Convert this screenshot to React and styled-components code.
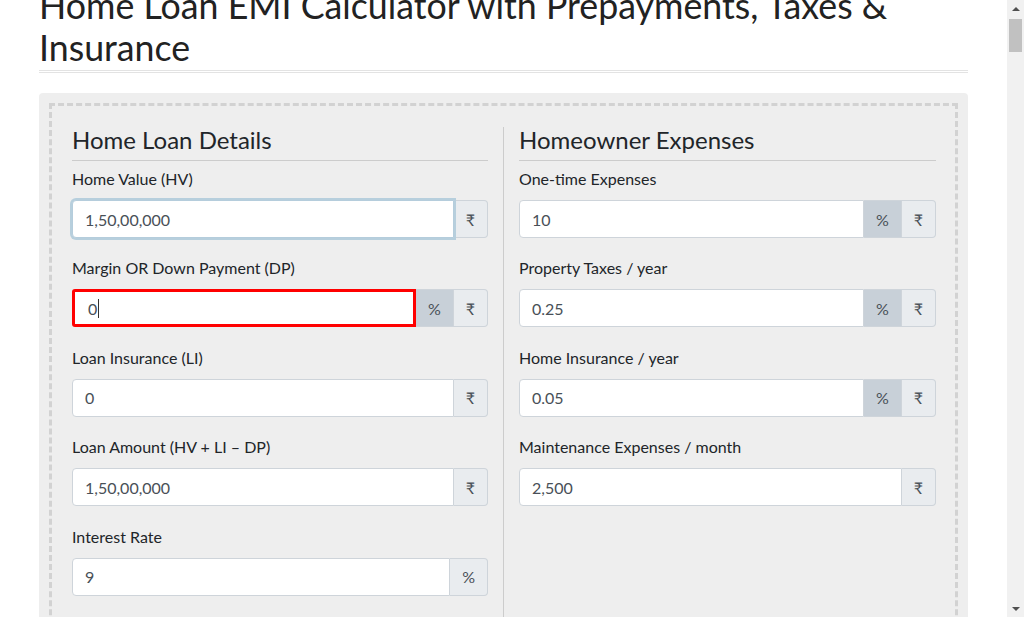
import React, { useLayoutEffect, useRef } from "react";
import styled, { createGlobalStyle, css } from "styled-components";

const GlobalStyle = createGlobalStyle`
    body {
        margin: 0;
        font-family: Lato, "Liberation Sans", "DejaVu Sans", sans-serif;
        color: #212529;
        background: #fff;
    }
`;

const left = [
    { label: "Home Value (HV)", value: "1,50,00,000", addons: ["₹"], focused: true },
    { label: "Margin OR Down Payment (DP)", value: "0", addons: ["%", "₹"], active: "%", invalid: true },
    { label: "Loan Insurance (LI)", value: "0", addons: ["₹"] },
    { label: "Loan Amount (HV + LI – DP)", value: "1,50,00,000", addons: ["₹"] },
    { label: "Interest Rate", value: "9", addons: ["%"] },
    { label: "Loan Tenure", value: "20", addons: ["Yr", "Mo"], active: "Yr" },
    { label: "Loan Fees & Charges", value: "0", addons: ["₹"] },
];

const right = [
    { label: "One-time Expenses", value: "10", addons: ["%", "₹"], active: "%" },
    { label: "Property Taxes / year", value: "0.25", addons: ["%", "₹"], active: "%" },
    { label: "Home Insurance / year", value: "0.05", addons: ["%", "₹"], active: "%" },
    { label: "Maintenance Expenses / month", value: "2,500", addons: ["₹"] },
];

const FormGroup = ({ item }) => (
    <Group>
        <Label>{item.label}</Label>
        <InputGroup>
            <Field focused={item.focused} invalid={item.invalid}>
                {item.value}
                {item.invalid && <Caret />}
            </Field>
            {item.addons.map(a => (
                <Addon key={a} active={item.active === a}>
                    {a}
                </Addon>
            ))}
        </InputGroup>
    </Group>
);

const App = () => {
    const viewport = useRef(null);

    // page is shown scrolled a little, title partly hidden
    useLayoutEffect(() => {
        if (viewport.current) viewport.current.scrollTop = 35;
    }, []);

    return (
        <Shell>
            <GlobalStyle />
            <Viewport ref={viewport}>
                <Page>
                    <Title>Home Loan EMI Calculator with Prepayments, Taxes &amp; Insurance</Title>
                    <Panel>
                        <Dashed>
                            <Column>
                                <Heading>Home Loan Details</Heading>
                                {left.map(item => (
                                    <FormGroup key={item.label} item={item} />
                                ))}
                            </Column>
                            <Column divided>
                                <Heading>Homeowner Expenses</Heading>
                                {right.map(item => (
                                    <FormGroup key={item.label} item={item} />
                                ))}
                            </Column>
                        </Dashed>
                    </Panel>
                </Page>
            </Viewport>
            <ScrollBar>
                <Arrow />
                <Track>
                    <Thumb />
                </Track>
                <Arrow down />
            </ScrollBar>
        </Shell>
    );
};

const Shell = styled.div`
    display: flex;
    height: 100vh;
    overflow: hidden;
`;

const Viewport = styled.div`
    flex: 1;
    overflow: hidden;
`;

const Page = styled.div`
    width: 929px;
    margin: 0 auto;
    padding: 20px 0 40px;
`;

const Title = styled.h1`
    margin: 0 0 20px;
    padding-bottom: 1px;
    font-size: 35.75px;
    line-height: 42px;
    font-weight: 400;
    color: #222;
    border-bottom: 3px double #e3e3e3;
`;

const Panel = styled.div`
    background: #eee;
    border-radius: 4px;
    padding: 10px;
`;

const Dashed = styled.div`
    border: 3px dashed #d2d2d2;
    padding-top: 21px;
    display: grid;
    grid-template-columns: 451px 1fr;
`;

const Column = styled.div`
    padding: 0 15px 0 20px;
    ${props =>
        props.divided &&
        css`
            border-left: 1px solid #ccc;
            padding: 0 19px 0 15px;
        `}
`;

const Heading = styled.h3`
    margin: 0 0 6px;
    padding: 0 0 7px;
    font-size: 24px;
    line-height: 26px;
    font-weight: 400;
    border-bottom: 1px solid #ccc;
`;

const Group = styled.div`
    margin-bottom: 18.4px;
`;

const Label = styled.label`
    display: block;
    font-size: 16px;
    line-height: 24px;
    margin-bottom: 9px;
    color: #212529;
`;

const InputGroup = styled.div`
    display: flex;
    height: 38px;
`;

const Field = styled.div`
    position: relative;
    flex: 1;
    display: flex;
    align-items: center;
    padding: 0 12px;
    background: #fff;
    border: 1px solid #ced4da;
    border-radius: 4px 0 0 4px;
    font-size: 16px;
    color: #495057;
    ${props =>
        props.focused &&
        css`
            z-index: 1;
            border-color: #b5cddc;
            box-shadow: 0 0 0 2px #b7cfdd;
        `}
    ${props =>
        props.invalid &&
        css`
            border: 3px solid #f00;
            border-radius: 3px 0 0 3px;
            padding-left: 13px;
        `}
`;

const Caret = styled.span`
    display: inline-block;
    width: 1px;
    height: 19px;
    margin-left: 1px;
    background: #333;
`;

const Addon = styled.span`
    display: flex;
    align-items: center;
    padding: 0 12px;
    font-size: 16px;
    color: #495057;
    font-family: Lato, "DejaVu Sans", sans-serif;
    background: ${props => (props.active ? "#c8d0d8" : "#e9ecef")};
    border: 1px solid #ced4da;
    border-left: none;
    &:last-child {
        border-radius: 0 4px 4px 0;
    }
`;

const ScrollBar = styled.div`
    width: 17px;
    flex: none;
    display: flex;
    flex-direction: column;
    background: #f1f1f1;
`;

const Arrow = styled.div`
    height: 17px;
    flex: none;
    display: flex;
    align-items: center;
    justify-content: center;
    &::before {
        content: "";
        width: 0;
        height: 0;
        border-left: 4px solid transparent;
        border-right: 4px solid transparent;
        ${props =>
            props.down
                ? css`
                      border-top: 4px solid #505050;
                  `
                : css`
                      border-bottom: 4px solid #505050;
                  `}
    }
`;

const Track = styled.div`
    flex: 1;
    padding: 2px 2px 0;
`;

const Thumb = styled.div`
    height: 33px;
    background: #c1c1c1;
`;

export default App;
